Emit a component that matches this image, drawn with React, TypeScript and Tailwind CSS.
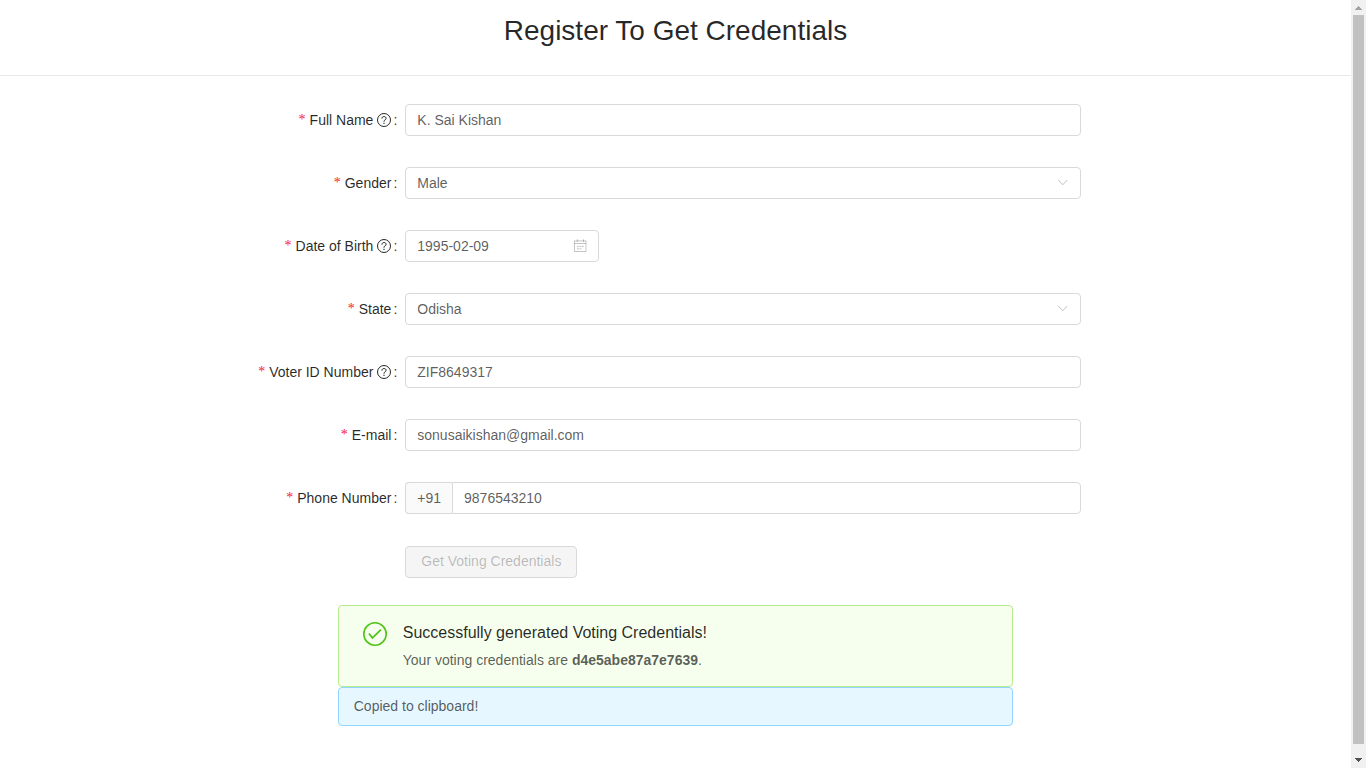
import type { ReactNode } from "react";

const box =
  "h-8 rounded border border-[#d9d9d9] bg-white px-[11px] text-sm text-black/65 outline-none";

type IconProps = { className?: string };

function QuestionIcon({ className }: IconProps) {
  return (
    <svg viewBox="0 0 14 14" className={className} fill="none" stroke="currentColor" aria-hidden="true">
      <circle cx="7" cy="7" r="6.5" strokeWidth="1" />
      <path d="M4.9 5.6C4.9 4.3 5.8 3.5 7 3.5S9.1 4.3 9.1 5.4C9.1 6.8 7 6.9 7 8.3V8.8" strokeWidth="1" />
      <path d="M7 9.7v1.2" strokeWidth="1.1" />
    </svg>
  );
}

function ChevronIcon({ className }: IconProps) {
  return (
    <svg viewBox="0 0 12 12" className={className} fill="none" stroke="currentColor" aria-hidden="true">
      <path d="M1.4 3 5.8 7.7 10.2 3" strokeWidth="1" />
    </svg>
  );
}

function CalendarIcon({ className }: IconProps) {
  return (
    <svg viewBox="0 0 14 14" className={className} fill="none" stroke="currentColor" aria-hidden="true">
      <path d="M1.5 1.9h11.5v10.6H1.5zM1.5 4.5h11.5" strokeWidth="0.9" />
      <path d="M4.2 0.3v2.6M10.5 0.3v2.6" strokeWidth="0.9" />
      <path d="M4 7.4h1.8M6.5 7.4h1.8M9 7.4h1.8M4 9.8h1.8M6.5 9.8h1.8" strokeWidth="1" />
    </svg>
  );
}

function CheckIcon({ className }: IconProps) {
  return (
    <svg viewBox="0 0 24 24" className={className} fill="none" stroke="currentColor" aria-hidden="true">
      <circle cx="12" cy="12" r="11.2" strokeWidth="1.6" />
      <path d="M5.9 11.5 9.4 15.9 18 7.6" strokeWidth="1.7" />
    </svg>
  );
}

type FieldProps = {
  id: string;
  label: string;
  help?: boolean;
  children: ReactNode;
};

function Field({ id, label, help, children }: FieldProps) {
  return (
    <div className="flex h-8 items-center">
      <label
        htmlFor={id}
        className="flex w-[30%] shrink-0 items-center justify-end pr-2 text-sm text-black/85"
      >
        <span className="mr-1 font-['Liberation_Serif',serif] text-[#f5222d]">*</span>
        <span>{label}</span>
        {help && <QuestionIcon className="ml-1 size-3.5" />}
        <span className="ml-0.5">:</span>
      </label>
      <div className="flex w-1/2">{children}</div>
    </div>
  );
}

function Select({ id, value, options }: { id: string; value: string; options: string[] }) {
  return (
    <div className="relative w-full">
      <select id={id} defaultValue={value} className={`${box} w-full appearance-none`}>
        {options.map((o) => (
          <option key={o}>{o}</option>
        ))}
      </select>
      <ChevronIcon className="pointer-events-none absolute top-2.5 right-3 size-3 text-black/25" />
    </div>
  );
}

function ScrollBar() {
  return (
    <div
      aria-hidden="true"
      className="sticky top-0 flex h-screen w-[15px] shrink-0 flex-col items-center bg-[#f1f1f1]"
    >
      <svg viewBox="0 0 15 15" className="size-[15px]" fill="#a3a3a3" shapeRendering="crispEdges">
        <path d="M7 6h1v1h1v1h1v1h1v1H4V9h1V8h1V7h1z" />
      </svg>
      <div className="mb-[9px] w-[11px] grow bg-[#c1c1c1]" />
      <svg viewBox="0 0 15 15" className="size-[15px]" fill="#505050" shapeRendering="crispEdges">
        <path d="M4 5h7v1h-1v1H9v1H8v1H7V8H6V7H5V6H4z" />
      </svg>
    </div>
  );
}

export default function App() {
  return (
    <div className="flex min-h-screen bg-white font-['Liberation_Sans',Arial,sans-serif]">
      <main className="min-w-0 grow">
        <header className="border-b border-[#e8e8e8] pt-[9px] pb-[22px]">
          <h1 className="text-center text-[28px] leading-11 text-black/85">
            Register To Get Credentials
          </h1>
        </header>

        <form className="flex flex-col gap-[31px] pt-7" onSubmit={(e) => e.preventDefault()}>
          <Field id="name" label="Full Name" help>
            <input id="name" className={`${box} w-full`} defaultValue="K. Sai Kishan" />
          </Field>
          <Field id="gender" label="Gender">
            <Select id="gender" value="Male" options={["Male", "Female", "Other"]} />
          </Field>
          <Field id="dob" label="Date of Birth" help>
            <div className="relative w-[194px]">
              <input id="dob" className={`${box} w-full`} defaultValue="1995-02-09" />
              <CalendarIcon className="pointer-events-none absolute top-[9px] right-3 size-3.5 text-black/25" />
            </div>
          </Field>
          <Field id="state" label="State">
            <Select id="state" value="Odisha" options={["Odisha", "Kerala", "Punjab"]} />
          </Field>
          <Field id="voter" label="Voter ID Number" help>
            <input id="voter" className={`${box} w-full`} defaultValue="ZIF8649317" />
          </Field>
          <Field id="email" label="E-mail">
            <input
              id="email"
              type="email"
              className={`${box} w-full`}
              defaultValue="sonusaikishan@gmail.com"
            />
          </Field>
          <Field id="phone" label="Phone Number">
            <span className="flex h-8 items-center rounded-l border border-r-0 border-[#d9d9d9] bg-[#fafafa] px-[11px] text-sm text-black/65">
              +91
            </span>
            <input
              id="phone"
              type="tel"
              className={`${box} min-w-0 grow rounded-l-none`}
              defaultValue="9876543210"
            />
          </Field>
          <div className="ml-[30%] pt-px">
            <button
              type="submit"
              disabled
              className="h-8 rounded border border-[#d9d9d9] bg-[#f5f5f5] px-[15px] pb-0.5 text-sm text-black/25"
            >
              Get Voting Credentials
            </button>
          </div>
        </form>

        <section className="mx-auto mt-[27px] w-1/2" aria-live="polite">
          <div className="flex rounded border border-[#b7eb8f] bg-[#f6ffed] px-6 py-[15px]">
            <CheckIcon className="mt-px mr-4 size-6 shrink-0 text-[#52c41a]" />
            <div>
              <p className="mb-[5px] text-base leading-6 text-black/85">
                Successfully generated Voting Credentials!
              </p>
              <p className="text-sm leading-[21px] text-black/65">
                Your voting credentials are <strong>d4e5abe87a7e7639</strong>.
              </p>
            </div>
          </div>
          <div className="rounded border border-[#91d5ff] bg-[#e6f7ff] px-[15px] py-2 text-sm leading-[21px] text-black/65">
            Copied to clipboard!
          </div>
        </section>
      </main>
      <ScrollBar />
    </div>
  );
}
